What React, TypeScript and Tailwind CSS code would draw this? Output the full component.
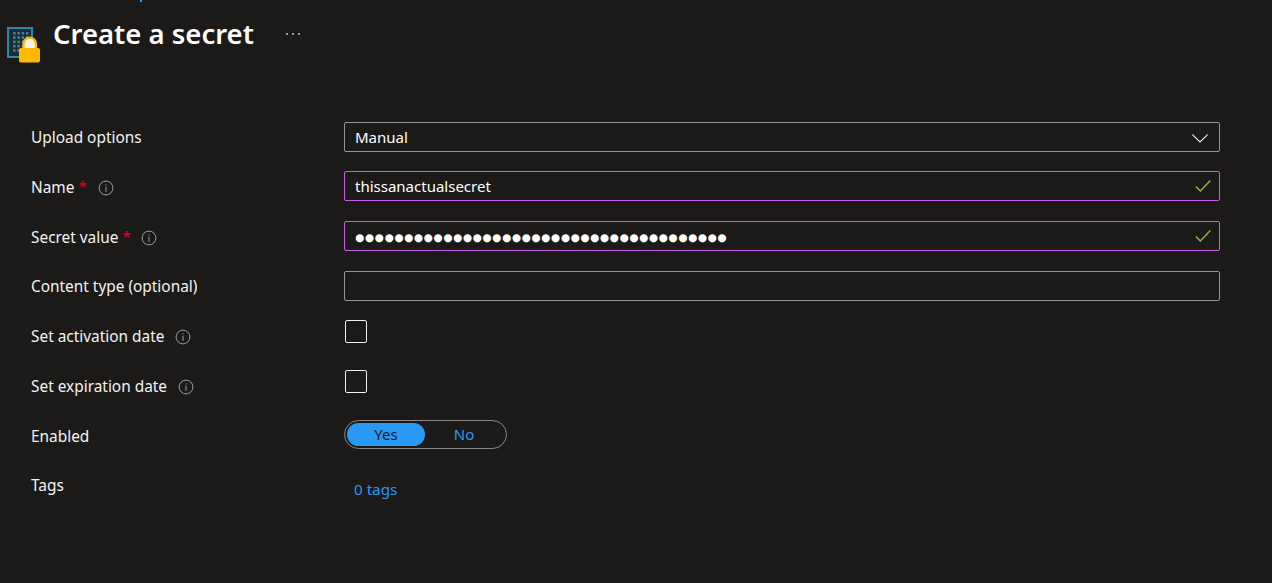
import React from "react";

function Info() {
  return (
    <svg width="16" height="16" viewBox="0 0 16 16" fill="none" className="shrink-0">
      <circle cx="8" cy="8" r="6.9" stroke="#a19f9d" strokeWidth="1" />
      <rect x="7.5" y="6.8" width="1" height="5" fill="#a19f9d" />
      <rect x="7.5" y="4.4" width="1" height="1.2" fill="#a19f9d" />
    </svg>
  );
}

function Check() {
  return (
    <svg width="16" height="14" viewBox="0 0 16 14" fill="none" className="absolute right-[8px] top-[7px]">
      <path d="M0.8 7.5 L5.3 12 L15.3 1.5" stroke="#8cbd4a" strokeWidth="1.4" />
    </svg>
  );
}

function Label({ text, req, info, gap, shift }: { text: string; req?: boolean; info?: boolean; gap?: string; shift?: string }) {
  return (
    <div className={"flex items-center w-[344px] shrink-0 pl-[31px] text-[#f3f2f1] " + (shift ?? "pt-[2px]")}>
      <span>{text}</span>
      {req && <span className="ml-[4px] -mt-[2px] text-[#e3001b] text-[15px] leading-none">*</span>}
      {info && <span className={gap ?? "ml-[11px]"}><Info /></span>}
    </div>
  );
}

function Row({ children, className }: { children: React.ReactNode; className?: string }) {
  return <div className={"flex items-center h-[30px] " + (className ?? "mb-[20px]")}>{children}</div>;
}

function Field({ value, valid, children }: { value?: string; valid?: boolean; children?: React.ReactNode }) {
  return (
    <div
      className={
        "relative w-[876px] h-[30px] rounded-[2px] border flex items-center pl-[10px] text-white text-[15px] " +
        (valid ? "border-[#c95de8]" : "border-[#979593]")
      }
    >
      {value}
      {valid && <Check />}
      {children}
    </div>
  );
}

function Box() {
  return <div className="w-[22px] h-[23px] self-start -mt-px ml-px rounded-[2px] border border-[#f3f2f1]" />;
}

export default function App() {
  return (
    <div className="relative w-[1272px] h-[583px] overflow-hidden bg-[#1b1a19] font-['Noto_Sans','Open_Sans',sans-serif] text-[15.4px]">
      <div className="absolute left-[140px] top-0 w-[2px] h-[2px] bg-[#2899f5]" />
      <header className="flex h-[122px] items-start">
        <svg width="34" height="36" viewBox="0 0 34 36" className="ml-[7px] mt-[27px] shrink-0">
          <rect x="1" y="1" width="24" height="29" fill="#1f2a30" stroke="#2f86b3" strokeWidth="2" />
          <g fill="#3d7f9e">
            {[0, 1, 2, 3, 4].map((r) =>
              [0, 1, 2, 3].map((c) => <rect key={r + "-" + c} x={6 + c * 4.3} y={5 + r * 4.3} width="2.6" height="2.6" />)
            )}
          </g>
          <path d="M16.5 22 V17 a6.2 6.2 0 0 1 12.4 0 V22" fill="#f4f4f4" stroke="#ffb900" strokeWidth="2.4" />
          <rect x="12" y="21" width="21" height="14.5" rx="2" fill="#ffb900" />
        </svg>
        <h1 className="ml-[12px] mt-[14px] text-[27.5px] leading-[40px] font-semibold text-white">Create a secret</h1>
        <div className="ml-[32px] mt-[33px] flex gap-[4px]">
          <span className="w-[2px] h-[2px] rounded-full bg-[#c8c6c4]" />
          <span className="w-[2px] h-[2px] rounded-full bg-[#c8c6c4]" />
          <span className="w-[2px] h-[2px] rounded-full bg-[#c8c6c4]" />
        </div>
      </header>

      <Row className="mb-[19px]">
        <Label text="Upload options" />
        <Field value="Manual">
          <svg width="16" height="9" viewBox="0 0 16 9" fill="none" className="absolute right-[11px] top-[11px]">
            <path d="M0.4 0.6 L8 8 L15.6 0.6" stroke="#f3f2f1" strokeWidth="1.1" />
          </svg>
        </Field>
      </Row>
      <Row>
        <Label text="Name" req info gap="ml-[11px]" shift="pt-[4px]" />
        <Field value="thissanactualsecret" valid />
      </Row>
      <Row>
        <Label text="Secret value" req info gap="ml-[10px]" shift="pt-[4px]" />
        <Field valid>
          <span className="pt-[2px] text-[10.5px] tracking-[0.63px] leading-none font-['DejaVu_Sans',sans-serif]">{"●".repeat(38)}</span>
        </Field>
      </Row>
      <Row>
        <Label text="Content type (optional)" />
        <Field />
      </Row>
      <Row>
        <Label text="Set activation date" info />
        <Box />
      </Row>
      <Row>
        <Label text="Set expiration date" info />
        <Box />
      </Row>
      <Row className="mb-[24px]">
        <Label text="Enabled" />
        <div className="w-[163px] h-[29px] -mt-px rounded-full border border-[#8a8886] p-[2px] flex text-center self-start text-[15px]">
          <div className="w-[78px] h-[23px] rounded-full bg-[#2899f5] text-[#1b1a19] leading-[23px]">Yes</div>
          <div className="w-[78px] h-[23px] text-[#2899f5] leading-[23px]">No</div>
        </div>
      </Row>
      <Row>
        <div className="w-[344px] shrink-0 pl-[31px] text-[#f3f2f1] -mt-[9px]">Tags</div>
        <span className="ml-[10px] -mt-[2px] text-[#2899f5] text-[15.2px]">0 tags</span>
      </Row>
    </div>
  );
}
